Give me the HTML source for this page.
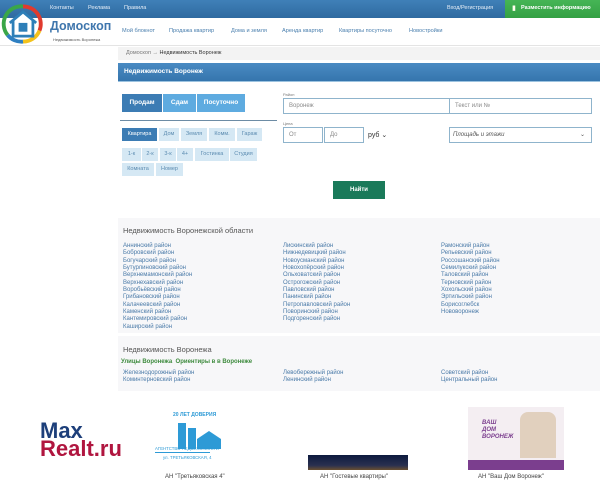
<!DOCTYPE html>
<html><head><meta charset="utf-8"><style>
*{margin:0;padding:0;box-sizing:border-box}
body{width:600px;height:486px;background:#fff;font-family:"Liberation Sans",sans-serif;position:relative;overflow:hidden;font-size:6px;color:#333}
.a{position:absolute;white-space:nowrap}
.top{left:0;top:0;width:600px;height:18px;background:linear-gradient(#3f80b8,#2f6aa0)}
.nav{color:#4a7fae;font-size:5.6px;top:28px}
.btn{position:absolute;height:18px;color:#fff;font-weight:bold;font-size:6.5px;text-align:center;line-height:18px}
.t{position:absolute;height:13px;background:#d5e8f4;color:#5b8bb0;font-size:5.5px;text-align:center;line-height:13px}
.in{position:absolute;border:1px solid #8fb4cc;background:#fff;color:#8a8a8a;font-size:6px;padding-left:5px;line-height:14px}
.col{position:absolute;color:#4a7aa8;font-size:6px;line-height:7.35px}
</style></head><body>
<div class="a top"></div>
<span class="a" style="left:50px;top:5px;color:#e6eef7;font-size:5.5px">Контакты</span>
<span class="a" style="left:88px;top:5px;color:#e6eef7;font-size:5.5px">Реклама</span>
<span class="a" style="left:124px;top:5px;color:#e6eef7;font-size:5.5px">Правила</span>
<span class="a" style="left:447px;top:5px;color:#e6eef7;font-size:5.5px">Вход/Регистрация</span>
<div class="a" style="left:505px;top:0;width:95px;height:18px;background:linear-gradient(#46b556,#34a044)"></div>
<span class="a" style="left:512px;top:4px;color:#ffe;font-size:7px">▮</span>
<span class="a" style="left:521px;top:5px;color:#fff;font-size:5.5px;font-weight:bold">Разместить информацию</span>
<svg class="a" style="left:1px;top:2px" width="44" height="44" viewBox="0 0 40 40">
<path d="M6 30 A16 16 0 0 1 20 4" stroke="#3aa648" stroke-width="3.5" fill="none"/>
<path d="M20 4 A16 16 0 0 1 35 26" stroke="#e03a2e" stroke-width="3.5" fill="none"/>
<path d="M35 26 A16 16 0 0 1 20 36" stroke="#f3c21b" stroke-width="3.5" fill="none"/>
<path d="M20 36 A16 16 0 0 1 6 30" stroke="#2f7fc1" stroke-width="3.5" fill="none"/>
<path d="M8 19 L20 9 L32 19 M11 17 V31 H29 V17" stroke="#2e7fb8" stroke-width="2.5" fill="#fff"/>
<rect x="16" y="19" width="8" height="8" fill="#2e7fb8"/>
</svg>
<span class="a" style="left:50px;top:19px;color:#3f76ad;font-size:12.5px;font-weight:bold">Домоскоп</span>
<span class="a" style="left:53px;top:37px;color:#555;font-size:4px">Недвижимость Воронежа</span>
<span class="a nav" style="left:122px">Мой блокнот</span>
<span class="a nav" style="left:169px">Продажа квартир</span>
<span class="a nav" style="left:231px">Дома и земля</span>
<span class="a nav" style="left:282px">Аренда квартир</span>
<span class="a nav" style="left:339px">Квартиры посуточно</span>
<span class="a nav" style="left:409px">Новостройки</span>
<div class="a" style="left:0;top:45px;width:600px;height:1px;background:#e4e4e4"></div>
<div class="a" style="left:118px;top:47px;width:482px;height:13px;background:#f3f3f3"></div>
<span class="a" style="left:126px;top:50px;font-size:5.5px;color:#777">Домоскоп → <span style="color:#333">Недвижимость Воронеж</span></span>
<div class="a" style="left:118px;top:63px;width:482px;height:18px;background:linear-gradient(#4a8bc3,#3575ad)"></div>
<span class="a" style="left:124px;top:68px;color:#fff;font-weight:bold;font-size:6.5px">Недвижимость Воронеж</span>
<div class="a" style="left:118px;top:81px;width:482px;height:1px;background:#9cc3e0"></div>
<div class="btn" style="left:122px;top:94px;width:40px;background:#3c7cb4">Продам</div>
<div class="btn" style="left:163px;top:94px;width:33px;background:#5eabe0">Сдам</div>
<div class="btn" style="left:197px;top:94px;width:48px;background:#5eabe0">Посуточно</div>
<div class="a" style="left:120px;top:120px;width:157px;height:1px;background:#6d8ca5"></div>
<div class="t" style="left:122px;top:128px;width:35px;background:#3c7cb4;color:#fff">Квартира</div>
<div class="t" style="left:159px;top:128px;width:20px">Дом</div>
<div class="t" style="left:181px;top:128px;width:26px">Земля</div>
<div class="t" style="left:209px;top:128px;width:26px">Комм.</div>
<div class="t" style="left:237px;top:128px;width:25px">Гараж</div>
<div class="t" style="left:122px;top:148px;width:19px">1-к</div>
<div class="t" style="left:142px;top:148px;width:16px">2-к</div>
<div class="t" style="left:160px;top:148px;width:16px">3-к</div>
<div class="t" style="left:177px;top:148px;width:16px">4+</div>
<div class="t" style="left:195px;top:148px;width:34px">Гостинка</div>
<div class="t" style="left:230px;top:148px;width:27px">Студия</div>
<div class="t" style="left:122px;top:163px;width:32px">Комната</div>
<div class="t" style="left:156px;top:163px;width:27px">Номер</div>
<span class="a" style="left:283px;top:92px;font-size:4px;color:#777">Район</span>
<div class="in" style="left:283px;top:98px;width:167px;height:16px">Воронеж</div>
<div class="in" style="left:449px;top:98px;width:143px;height:16px">Текст или №</div>
<span class="a" style="left:283px;top:121px;font-size:4px;color:#777">Цена</span>
<div class="in" style="left:283px;top:127px;width:40px;height:16px">От</div>
<div class="in" style="left:324px;top:127px;width:40px;height:16px">До</div>
<span class="a" style="left:368px;top:131px;font-size:7px;color:#333">руб ⌄</span>
<div class="in" style="left:449px;top:127px;width:143px;height:16px;color:#555;font-style:italic;padding-left:3px">Площадь и этажи<span style="position:absolute;right:6px;font-style:normal">⌄</span></div>
<div class="btn" style="left:333px;top:181px;width:52px;background:#1a7a5a;font-size:6px">Найти</div>
<div class="a" style="left:118px;top:218px;width:482px;height:115px;background:#f7f7f9"></div>
<span class="a" style="left:123px;top:226px;font-size:7.5px;color:#555">Недвижимость Воронежской области</span>
<div class="col" style="left:123px;top:243px">Аннинский район<br>Бобровский район<br>Богучарский район<br>Бутурлиновский район<br>Верхнемамонский район<br>Верхнехавский район<br>Воробьёвский район<br>Грибановский район<br>Калачеевский район<br>Каменский район<br>Кантемировский район<br>Каширский район</div>
<div class="col" style="left:283px;top:243px">Лискинский район<br>Нижнедевицкий район<br>Новоусманский район<br>Новохопёрский район<br>Ольховатский район<br>Острогожский район<br>Павловский район<br>Панинский район<br>Петропавловский район<br>Поворинский район<br>Подгоренский район</div>
<div class="col" style="left:441px;top:243px">Рамонский район<br>Репьевский район<br>Россошанский район<br>Семилукский район<br>Таловский район<br>Терновский район<br>Хохольский район<br>Эртильский район<br>Борисоглебск<br>Нововоронеж</div>
<div class="a" style="left:118px;top:336px;width:482px;height:55px;background:#f7f7f9"></div>
<span class="a" style="left:123px;top:345px;font-size:7.5px;color:#555">Недвижимость Воронежа</span>
<span class="a" style="left:121px;top:359px;font-size:6px;color:#3d8a3d;font-weight:bold">Улицы Воронежа &nbsp;Ориентиры в в Воронеже</span>
<div class="col" style="left:123px;top:370px">Железнодорожный район<br>Коминтерновский район</div>
<div class="col" style="left:283px;top:370px">Левобережный район<br>Ленинский район</div>
<div class="col" style="left:441px;top:370px">Советский район<br>Центральный район</div>
<div class="a" style="left:40px;top:422px;font-size:22px;font-weight:bold;line-height:18px;color:#1d3f7a">Max<br><span style="color:#b0153f">Realt.ru</span></div>
<span class="a" style="left:173px;top:412px;font-size:5px;color:#2d9ad6;font-weight:bold">20 ЛЕТ ДОВЕРИЯ</span>
<div class="a" style="left:178px;top:423px;width:8px;height:26px;background:#2d9ad6"></div>
<div class="a" style="left:188px;top:428px;width:8px;height:21px;background:#2d9ad6"></div>
<svg class="a" style="left:197px;top:431px" width="24" height="18"><path d="M0 8 L12 0 L24 8 V18 H0Z" fill="#2d9ad6"/></svg>
<div class="a" style="left:155px;top:452px;width:55px;height:1px;background:#2d9ad6"></div>
<span class="a" style="left:155px;top:446px;font-size:4.3px;color:#2d9ad6">АГЕНТСТВО НЕДВИЖИМОСТИ</span>
<span class="a" style="left:163px;top:455px;font-size:4.3px;color:#2d9ad6">ул. ТРЕТЬЯКОВСКАЯ, 4</span>
<span class="a" style="left:165px;top:474px;font-size:6px;color:#444">АН "Третьяковская 4"</span>
<div class="a" style="left:308px;top:455px;width:100px;height:15px;background:linear-gradient(#0d1a3e,#2a3050 70%,#6a5030)"></div>
<span class="a" style="left:320px;top:474px;font-size:6px;color:#444">АН "Гостевые квартиры"</span>
<div class="a" style="left:468px;top:407px;width:96px;height:63px;background:#f4eef2"></div>
<div class="a" style="left:468px;top:460px;width:96px;height:10px;background:#7b3e8e"></div>
<span class="a" style="left:482px;top:420px;font-size:6px;color:#7b3e8e;font-weight:bold;font-style:italic;line-height:7px">ВАШ<br>ДОМ<br>ВОРОНЕЖ</span>
<div class="a" style="left:520px;top:412px;width:36px;height:46px;background:#d9c3a8;border-radius:8px 8px 0 0;opacity:.7"></div>
<span class="a" style="left:478px;top:474px;font-size:6px;color:#444">АН "Ваш Дом Воронеж"</span>
</body></html>
